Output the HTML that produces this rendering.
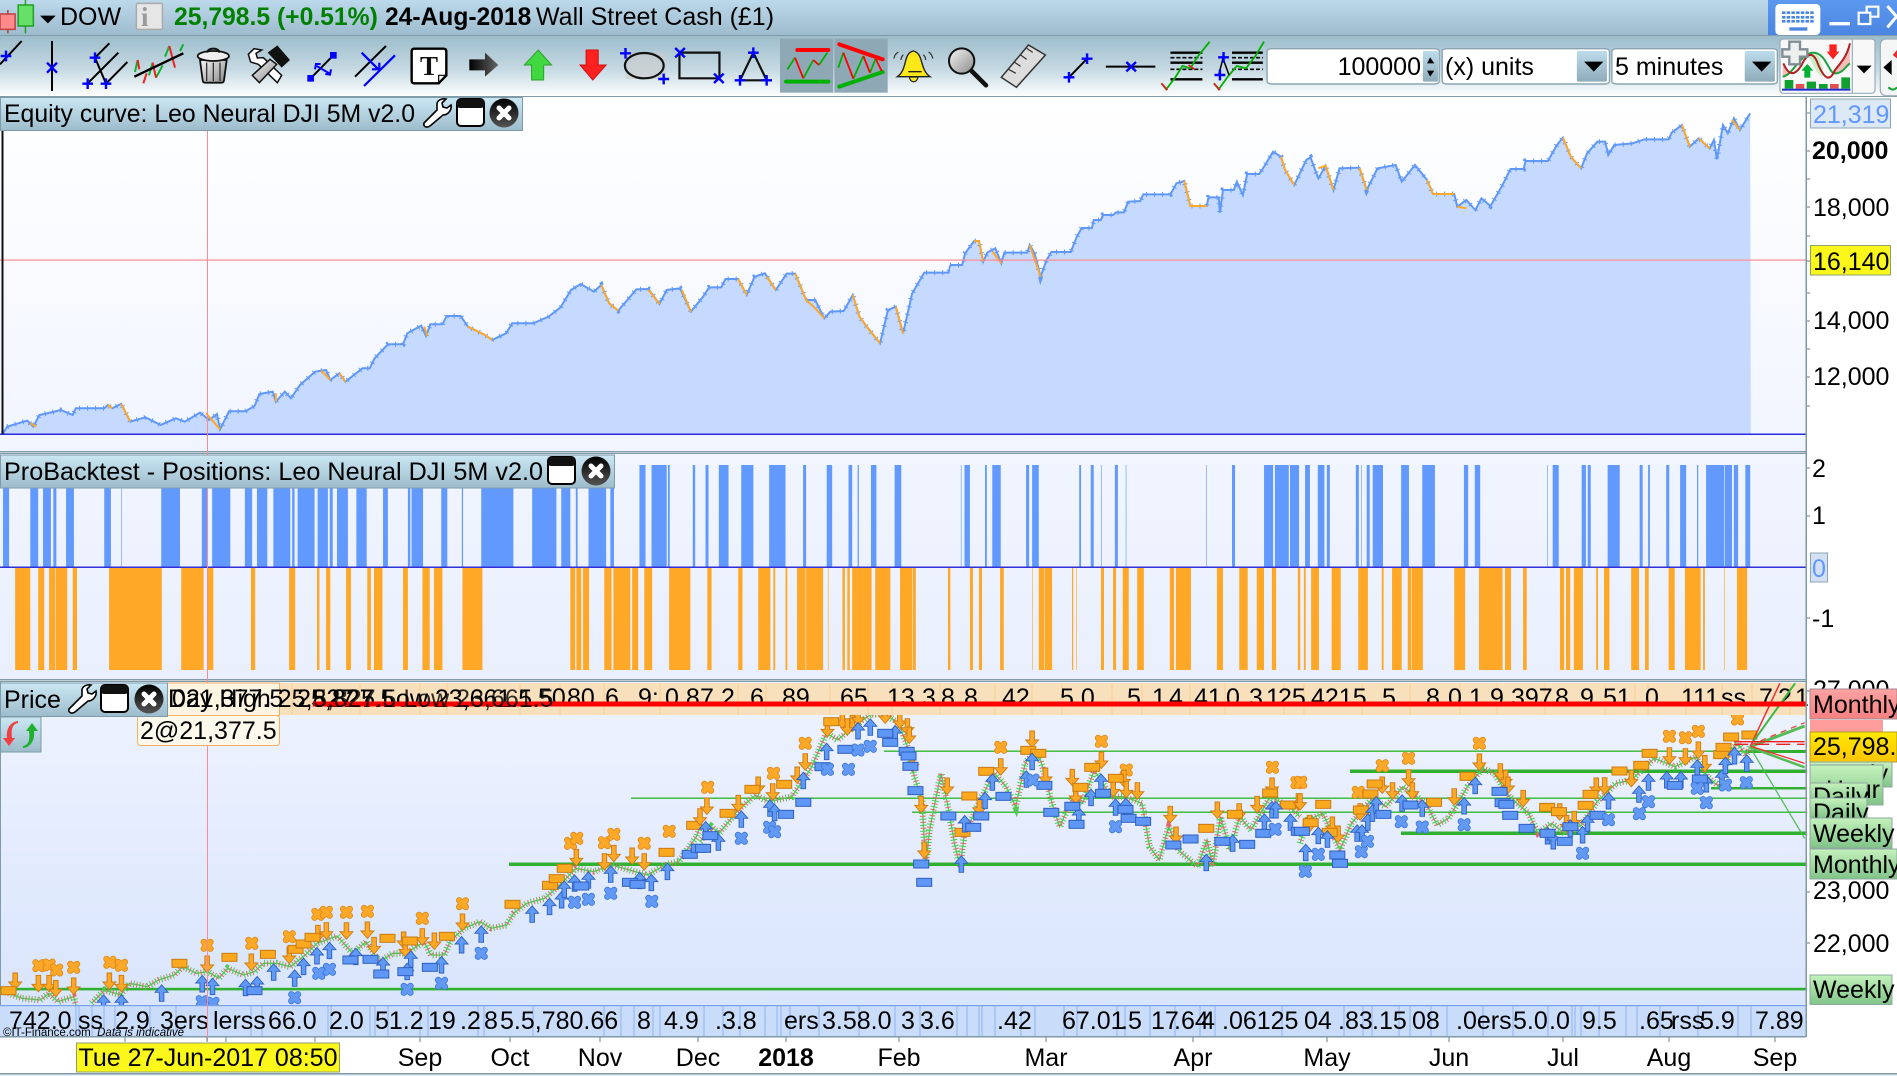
<!DOCTYPE html>
<html><head><meta charset="utf-8"><title>DOW</title>
<style>
html,body{margin:0;padding:0;background:#fff;width:1897px;height:1076px;overflow:hidden}
svg{position:absolute;left:0;top:0;display:block}
text{font-family:"Liberation Sans",Arial,sans-serif;font-size:25px;fill:#000;white-space:pre}
.n *{vector-effect:non-scaling-stroke}
.b{font-weight:bold}
</style></head><body>
<svg width="1897" height="1076" viewBox="0 0 1897 1076" xmlns="http://www.w3.org/2000/svg">
<defs>
<linearGradient id="gT" x1="0" y1="0" x2="0" y2="1"><stop offset="0" stop-color="#bcd9ec"/><stop offset="1" stop-color="#9dbccd"/></linearGradient>
<linearGradient id="gB" x1="0" y1="0" x2="0" y2="1"><stop offset="0" stop-color="#9dbdcc"/><stop offset=".55" stop-color="#c5d9e2"/><stop offset="1" stop-color="#fdfefe"/></linearGradient>
<linearGradient id="gH" x1="0" y1="0" x2="0" y2="1"><stop offset="0" stop-color="#cbe7f4"/><stop offset="1" stop-color="#9dbccb"/></linearGradient>
<linearGradient id="gE" x1="0" y1="0" x2="0" y2="1"><stop offset="0" stop-color="#fff"/><stop offset="1" stop-color="#f1f5ff"/></linearGradient>
<linearGradient id="gP" x1="0" y1="0" x2="0" y2="1"><stop offset="0" stop-color="#f1f5ff"/><stop offset="1" stop-color="#e9effd"/></linearGradient>
<linearGradient id="gR" x1="0" y1="0" x2="0" y2="1"><stop offset="0" stop-color="#eff3ff"/><stop offset="1" stop-color="#d9e5fc"/></linearGradient>
<linearGradient id="gD" x1="0" y1="0" x2="0" y2="1"><stop offset="0" stop-color="#bcdcec"/><stop offset="1" stop-color="#8fabb9"/></linearGradient>
<linearGradient id="gG" x1="0" y1="0" x2="0" y2="1"><stop offset="0" stop-color="#c4f2bc"/><stop offset="1" stop-color="#80c488"/></linearGradient>
<linearGradient id="gO" x1="0" y1="0" x2="0" y2="1"><stop offset="0" stop-color="#ffe900"/><stop offset="1" stop-color="#fdc400"/></linearGradient>
<linearGradient id="gRd" x1="0" y1="0" x2="0" y2="1"><stop offset="0" stop-color="#ffa3a3"/><stop offset="1" stop-color="#f78080"/></linearGradient>
<linearGradient id="gC" x1="0" y1="0" x2="0" y2="1"><stop offset="0" stop-color="#000"/><stop offset="1" stop-color="#555"/></linearGradient>
<linearGradient id="gW" x1="0" y1="0" x2="0" y2="1"><stop offset="0" stop-color="#5c98ee"/><stop offset="1" stop-color="#4a86e2"/></linearGradient>
<linearGradient id="gA" x1="0" y1="0" x2="1" y2="0"><stop offset="0" stop-color="#000"/><stop offset="1" stop-color="#666"/></linearGradient>
<linearGradient id="gS" x1="0" y1="0" x2="1" y2="1"><stop offset="0" stop-color="#f6f6f6"/><stop offset="1" stop-color="#8a8a8a"/></linearGradient>
<g id="A"><path d="M-3.300-3.300L3.300 3.300M3.300-3.300L-3.300 3.300" fill="none" stroke="#dd8a18" stroke-width="6.500" stroke-linecap="round"/><path d="M-3.300-3.300L3.300 3.300M3.300-3.300L-3.300 3.300" fill="none" stroke="#ffa726" stroke-width="4.800" stroke-linecap="round"/></g>
<g id="B"><path d="M-2.300-8H2.300V1H6.500L0 8.500-6.500 1H-2.300Z" fill="#ffa726" stroke="#c97a10" stroke-width=".9"/></g>
<g id="C"><rect x="-7.500" y="-4" width="15" height="8" fill="#faa91f" stroke="#c97a10"/></g>
<g id="D"><path d="M-2.300 8H2.300V-1H6.500L0-8.500-6.500-1H-2.300Z" fill="#5f9bf5" stroke="#2f5fc0" stroke-width=".9"/></g>
<g id="E"><rect x="-7.500" y="-4" width="15" height="8" fill="#5e97f5" stroke="#2f5fc0"/></g>
<g id="F"><path d="M-3.300-3.300L3.300 3.300M3.300-3.300L-3.300 3.300" fill="none" stroke="#3f78d8" stroke-width="6.500" stroke-linecap="round"/><path d="M-3.300-3.300L3.300 3.300M3.300-3.300L-3.300 3.300" fill="none" stroke="#6199f5" stroke-width="4.800" stroke-linecap="round"/></g>
<g id="a3" transform="scale(2.24,3)"><use href="#A"/></g><g id="b3" transform="scale(2.24,3)"><use href="#B"/></g><g id="c3" transform="scale(2.24,3)"><use href="#C"/></g><g id="d3" transform="scale(2.24,3)"><use href="#D"/></g><g id="e3" transform="scale(2.24,3)"><use href="#E"/></g><g id="f3" transform="scale(2.24,3)"><use href="#F"/></g>
<g id="a5" transform="scale(2.613,3)"><use href="#A"/></g><g id="b5" transform="scale(2.613,3)"><use href="#B"/></g><g id="c5" transform="scale(2.613,3)"><use href="#C"/></g><g id="d5" transform="scale(2.613,3)"><use href="#D"/></g><g id="e5" transform="scale(2.613,3)"><use href="#E"/></g><g id="f5" transform="scale(2.613,3)"><use href="#F"/></g>
<g id="a4" transform="scale(2.626,3)"><use href="#A"/></g><g id="b4" transform="scale(2.626,3)"><use href="#B"/></g><g id="c4" transform="scale(2.626,3)"><use href="#C"/></g><g id="d4" transform="scale(2.626,3)"><use href="#D"/></g><g id="e4" transform="scale(2.626,3)"><use href="#E"/></g><g id="f4" transform="scale(2.626,3)"><use href="#F"/></g>
<path id="p" d="M-9 0H9M0-16V16" fill="none" stroke="#0000ff" stroke-width="2.400" vector-effect="non-scaling-stroke"/>
<path id="x" d="M-8-14L8 14M8-14L-8 14" fill="none" stroke="#0000ff" stroke-width="2.400" vector-effect="non-scaling-stroke"/>
<path id="pu" d="M-16 0H16M0-16V16" fill="none" stroke="#0000ff" stroke-width="2.400" vector-effect="non-scaling-stroke"/>
<path id="xu" d="M-15-15L15 15M15-15L-15 15" fill="none" stroke="#0000ff" stroke-width="2.400" vector-effect="non-scaling-stroke"/>
<g id="wr"><path d="M2 25L15 12V6C15 3 19 0 24 1L20 5 21 9 25 10 29 7C30 12 26 17 21 17L8 28C5 30 1 29 2 25Z" fill="#fff" stroke="#000" stroke-width="1.600"/></g>
<g id="win"><rect x="1" y="1" width="27" height="27" rx="4" fill="#fff" stroke="#000" stroke-width="2"/><rect x="1" y="1" width="27" height="9" rx="3" fill="#111"/></g>
<g id="cl"><circle cx="15" cy="15" r="14.500" fill="url(#gC)"/><path d="M10 10L20 20M20 10L10 20" stroke="#fff" stroke-width="5" stroke-linecap="round"/></g>
<path id="c8" fill="none" vector-effect="non-scaling-stroke" d="M5 1000L12 980 30 970 45 962 55 980 65 945 90 935 100 930 120 945 125 925 172 925 178 915 185 925 200 912 215 965 240 952 265 975 290 955 305 965 330 938 345 960 358 942 363 988 378 934 405 934 420 918 428 882 450 875 455 905 470 875 480 895 495 855 520 815 538 810 545 840 560 820 570 845 598 805 610 805 618 775 640 733 665 733 672 700 695 677 703 708 710 673 730 673 737 648 760 648 772 680 800 705 812 720 835 700 845 670 880 670 905 650 925 622 942 570 958 552 980 575 992 555 1005 610 1020 632 1050 568 1070 567 1088 612 1100 570 1122 565 1140 635 1160 590 1170 562 1190 562 1197 537 1218 537 1232 585 1245 530 1262 520 1280 570 1298 521 1312 521 1330 600 1345 600 1360 655 1370 635 1392 633 1407 585 1418 650 1430 680 1452 730 1465 630 1478 620 1490 700 1505 580 1525 518 1565 518 1568 495"/>
<path id="c9" fill="none" vector-effect="non-scaling-stroke" d="M0 495L20 495 25 460 40 423 48 423 55 485 62 457 75 445 85 490 90 458 128 458 132 435 140 460 150 530 160 480 168 456 200 456 210 410 218 384 235 384 238 360 250 360 253 345 270 345 275 337 288 337 295 305 315 303 320 283 365 283 375 250 388 243 398 318 425 318 428 292 445 292 447 338 452 270 470 270 475 245 485 285 492 222 512 222 520 200 535 155 548 170 555 210 570 255 590 180 597 172 610 235 622 197 635 270 645 205 678 203 690 270 708 205 738 195 748 245 770 195 790 240 800 282 835 282 840 320 855 300 870 330 880 295 895 318 915 255 928 207 950 207 953 183 990 183 1005 135 1015 113 1028 170 1045 205 1055 160 1072 125 1085 125 1090 165 1100 135 1130 130 1150 118 1190 118 1195 98 1212 75 1225 140 1240 115 1258 145 1265 120 1270 178 1280 75 1288 100 1298 55 1308 90 1325 40"/>
<path id="q3" fill="none" vector-effect="non-scaling-stroke" d="M0 960L20 970 50 985 90 990 110 970 130 995 165 980 170 1005M205 1000L235 960 270 975 290 940 330 950 355 930 390 915 410 890 440 910 465 905 490 925 510 895 545 915 570 905 590 880 620 880 650 890 680 860 710 820 740 805 755 798 790 850 820 815 850 875 880 850 910 850 950 815 965 855 995 855 1010 810 1040 775 1075 755 1100 775 1135 765 1150 730 1180 700 1220 685 1250 650 1290 595 1330 605 1370 585 1410 600 1450 615 1490 585 1520 575 1560 500 1568 470"/>
<path id="q5" fill="none" vector-effect="non-scaling-stroke" d="M0 515L30 470 50 490 100 420 145 375 180 395 240 380 290 295 330 190 360 210 400 170 445 135 480 130 520 160 545 240 560 320 580 390 590 590 600 480 610 420 630 310 650 420 665 520 680 590 690 500 720 420 750 350 770 310 800 350 825 410 850 280 870 250 890 270 920 400 940 470 975 380 1000 400 1030 300 1075 380 1110 380 1155 400 1175 530 1200 570 1225 470 1250 540 1300 590 1325 510 1340 590 1360 440 1385 540 1410 440 1440 480 1490 380 1540 410 1568 440"/>
<path id="q4" fill="none" vector-effect="non-scaling-stroke" d="M0 520L20 450 60 430 105 540 135 460 190 385 225 410 270 350 330 400 360 465 390 445 440 350 480 295 510 310 550 380 600 430 625 490 660 460 695 490 740 465 780 395 830 340 870 330 930 265 985 290 1040 260 1070 320 1100 350 1130 240 1150 220 1170 255 1182 230"/>
</defs>

<!-- title bar -->
<rect x="0" y="0" width="1897" height="35" fill="url(#gT)"/>
<rect x="0" y="35" width="1897" height="1" fill="#7f9ba8"/>
<rect x="0" y="36" width="1897" height="60" fill="url(#gB)"/>
<rect x="0" y="96" width="1897" height="1" fill="#7f9ba8"/>
<rect x="1768" y="0" width="129" height="35" fill="url(#gW)"/>
<g transform="translate(1700,0) scale(.33333)" class="n">
<rect x="226" y="12" width="135" height="93" rx="13" fill="#fff"/>
<path d="M246 38H342M246 52H342M246 64H342" stroke="#4a86e2" stroke-width="2.600" stroke-dasharray="3.500 1.200"/>
<rect x="268" y="82" width="54" height="10" fill="#4a86e2"/>
<rect x="388" y="66" width="62" height="10" fill="#fff"/>
<rect x="500" y="20" width="35" height="30" fill="none" stroke="#fff" stroke-width="2.200"/>
<rect x="476" y="38" width="35" height="34" fill="#4a86e2" stroke="#fff" stroke-width="2.200"/>
<path d="M562 18L590 50 562 82" fill="none" stroke="#fff" stroke-width="3"/>
</g>

<g transform="scale(.6061,.3333)" class="n">
<path d="M13 30V100" stroke="#b04040" stroke-width="1.500"/><rect x="0" y="42" width="25" height="46" fill="#ff8a8a" stroke="#c04040" stroke-width="1.500"/>
<path d="M42 0V100" stroke="#20a020" stroke-width="1.500"/><rect x="30" y="15" width="25" height="63" fill="#66e066" stroke="#20a020" stroke-width="1.500"/>
<path d="M66 47H92L79 70Z" fill="#000"/>
<rect x="225" y="10" width="43" height="78" rx="3" fill="#e6e6e6" stroke="#aaa" stroke-width="1.500"/>
<path d="M775 0" fill="none"/>
<path d="M888 150L910 195H897V240H877V195H865Z" fill="#40d840" stroke="#30a030"/>
<path d="M978 240L1000 195H987V150H967V195H957Z" fill="#ff2020" stroke="#d01010"/>
<rect x="1032" y="157" width="66" height="80" fill="#ccc" opacity=".6"/><ellipse cx="1063" cy="197" rx="32" ry="38" fill="none" stroke="#111" stroke-width="2.200"/><use href="#p" x="1032" y="160"/><use href="#p" x="1095" y="237"/>
<rect x="1121" y="158" width="66" height="77" fill="none" stroke="#111" stroke-width="2.200"/><use href="#x" x="1122" y="158"/><use href="#x" x="1186" y="235"/>
</g>
<!-- left tools, uniform 3x coords -->
<g transform="translate(0,36) scale(.33333)" class="n" fill="none">
<path d="M0 85L65 15" stroke="#000" stroke-width="2"/><use href="#pu" x="18" y="60"/>
<path d="M156 15V165" stroke="#000" stroke-width="2"/><use href="#xu" x="156" y="95"/>
<path d="M285 65L328 22M265 140L355 50M318 143L382 78M285 65L318 143" stroke="#000" stroke-width="2"/><use href="#pu" x="285" y="65"/><use href="#pu" x="263" y="143"/><use href="#pu" x="318" y="143"/>
<path d="M405 108L413 72M447 118L458 80M468 125L488 88M495 62L508 30M540 45L550 25" stroke="#10b030" stroke-width="2"/>
<path d="M413 72L418 100M430 142L440 112M458 80L468 125M508 30L525 95" stroke="#f02020" stroke-width="2"/>
<path d="M403 122L550 52" stroke="#000" stroke-width="2.400"/>
<path d="M600 72H680L672 133Q671 140 664 140H616Q609 140 608 133Z" fill="url(#gS)" stroke="#111" stroke-width="1.800"/>
<ellipse cx="640" cy="60" rx="47" ry="15" fill="#eee" stroke="#111" stroke-width="1.800"/><path d="M622 50C622 34 658 34 658 50" stroke="#111" stroke-width="2"/>
<path d="M620 80V135M640 80V135M660 80V135" stroke="#333" stroke-width="1.300"/>
<path d="M745 55L762 38 785 42 768 52 772 66 790 65 845 118 832 140 775 85 752 78Z" fill="#fff" stroke="#111" stroke-width="1.500" transform="translate(0,0)"/>
<path d="M757 118L810 70 830 85 778 140Z" fill="url(#gS)" stroke="#111" stroke-width="1.500"/>
<path d="M803 50L832 28 870 72 845 95Z" fill="#111"/>
<path d="M932 127L1000 58" stroke="#000" stroke-width="2"/><path d="M922 117h20v20h-20zM990 48h20v20h-20z" fill="#0000ff"/>
<path d="M950 90L988 112M945 100L948 84 962 84M993 100L990 116 976 114" stroke="#0000ff" stroke-width="2"/>
<path d="M1065 122L1158 30" stroke="#000" stroke-width="2"/><path d="M1092 150L1185 58" stroke="#0000ff" stroke-width="2.200"/><path d="M1085 50L1135 100M1116 100H1138V80" stroke="#0000ff" stroke-width="2.200"/>
<path d="M1243 38H1330Q1339 38 1339 46V118L1316 142H1243Q1235 142 1235 134V46Q1235 38 1243 38Z" fill="#fff" stroke="#000" stroke-width="2.400"/><path d="M1316 142V118H1339" stroke="#000" stroke-width="1.200"/>
<path d="M1408 70H1455V50L1495 87 1455 122V103H1408Z" fill="url(#gA)"/>
</g>
<!-- middle tools, uniform coords -->
<g transform="translate(700,36) scale(.33333)" class="n" fill="none">
<path d="M160 50L120 133H200Z" stroke="#111" stroke-width="2.200"/><use href="#pu" x="160" y="50"/><use href="#pu" x="120" y="133"/><use href="#pu" x="200" y="133"/>
<rect x="240" y="8" width="160" height="162" fill="#8fa8b6"/><rect x="403" y="8" width="160" height="162" fill="#8fa8b6"/>
<path d="M292 42H385" stroke="#ff0000" stroke-width="4" stroke-linecap="round"/><path d="M258 137H385" stroke="#00b000" stroke-width="4" stroke-linecap="round"/>
<path d="M262 100L285 65M310 127L340 72M357 87L382 50" stroke="#00b000" stroke-width="1.800"/><path d="M285 65L310 127M340 72L357 87" stroke="#ff0000" stroke-width="1.800"/>
<path d="M418 25L548 70" stroke="#ff0000" stroke-width="4" stroke-linecap="round"/><path d="M418 152L548 108" stroke="#00b000" stroke-width="4" stroke-linecap="round"/>
<path d="M415 95L430 50M460 128L490 60M510 110L527 68" stroke="#00b000" stroke-width="1.800"/><path d="M430 50L460 128M490 60L510 110M527 68L545 105" stroke="#ff0000" stroke-width="1.800"/>
<path d="M640 45C608 52 624 100 592 122H690C658 100 672 52 640 45Z" fill="#ffe81a" stroke="#222" stroke-width="1.400"/><path d="M625 107H665" stroke="#222" stroke-width="1.400"/><path d="M628 123C630 142 652 142 654 123Z" fill="#ffe81a" stroke="#222" stroke-width="1.200"/>
<path d="M582 68C582 60 588 52 595 48M603 72C603 66 606 60 610 56M698 68C698 60 692 52 686 48M677 72C677 66 674 60 670 56" stroke="#333" stroke-width="1.200"/>
<circle cx="785" cy="75" r="38" fill="url(#gS)" stroke="#111" stroke-width="2"/><path d="M815 105L858 148" stroke="#111" stroke-width="4.500" stroke-linecap="round"/>
</g>
<g transform="translate(950,0) scale(.6039,.3333)" class="n">
<path d="M85 232L130 135 158 165 110 262Z" fill="#ddd" stroke="#333" stroke-width="1.500"/><path d="M97 208L109 220M107 187L117 199M117 165L127 178M127 145L137 157" stroke="#333" stroke-width="1.200"/>
<path d="M197 232L227 176" stroke="#000" stroke-width="2"/><use href="#p" x="197" y="232"/><use href="#p" x="227" y="176"/>
<path d="M258 200H340" stroke="#000" stroke-width="2"/><use href="#x" x="300" y="200"/>
<path d="M365 158H418M365 238H418M365 188H418" stroke="#000" stroke-width="2.400"/><path d="M365 173H418M365 208H418" stroke="#000" stroke-width="1.600" stroke-dasharray="4 2"/>
<path d="M350 250L358 268 372 235 385 198 398 205 410 170 430 125" fill="none" stroke="#00b000" stroke-width="1.800"/><path d="M350 250L360 270M395 195L405 208" stroke="#e02020" stroke-width="1.800"/>
<path d="M467 158H518M467 238H518M467 188H518" stroke="#000" stroke-width="2.400"/><path d="M467 173H518M467 208H518" stroke="#000" stroke-width="1.600" stroke-dasharray="4 2"/>
<path d="M437 250L445 268 460 230 475 198 490 205 505 170 520 125" fill="none" stroke="#00b000" stroke-width="1.800"/><path d="M437 250L447 270" stroke="#e02020" stroke-width="1.800"/><path d="M452 175L445 225M452 175L462 225" stroke="#000" stroke-width="1.500"/><use href="#p" x="453" y="172"/><use href="#p" x="447" y="225"/>
<rect x="525" y="146" width="285" height="106" rx="8" fill="#fff" stroke="#8ba5b2" stroke-width="1.400"/>
<rect x="783" y="153" width="25" height="92" rx="3" fill="url(#gD)"/><path d="M790 190L795 172 802 190ZM790 212L795 230 802 212Z" fill="#000"/>
<rect x="815" y="146" width="277" height="106" rx="8" fill="#fff" stroke="#8ba5b2" stroke-width="1.400"/><rect x="1038" y="153" width="50" height="92" rx="4" fill="url(#gD)"/><path d="M1050 185H1082L1066 215Z" fill="#000"/>
<rect x="1096" y="146" width="274" height="106" rx="8" fill="#fff" stroke="#8ba5b2" stroke-width="1.400"/><rect x="1316" y="153" width="50" height="92" rx="4" fill="url(#gD)"/><path d="M1328 185H1360L1344 215Z" fill="#000"/>
</g>
<!-- indicator button -->
<g transform="translate(1700,0) scale(.33333)" class="n">
<rect x="240" y="117" width="285" height="163" rx="10" fill="#f8f8f8" stroke="#9aaeb9" stroke-width="1.200"/><path d="M457 117V280" stroke="#9aaeb9" stroke-width="1.200"/>
<path d="M470 197H515L492 220Z" fill="#000"/>
<path d="M250 190C268 225 288 232 310 188C300 205 270 225 248 226Z" fill="#f6bcb8"/><path d="M340 158C355 158 365 185 372 225 355 240 340 190 322 165Z" fill="#c9efc4"/><path d="M405 212C425 190 440 170 450 130V190C435 200 420 218 405 220Z" fill="#f6bcb8"/>
<path d="M248 230C280 225 300 160 340 158C380 160 385 220 405 220C430 220 440 195 450 190" fill="none" stroke="#20a040" stroke-width="2"/>
<path d="M250 190C265 225 285 235 310 185C330 150 345 165 355 195C375 240 390 245 405 210C425 185 440 170 450 130" fill="none" stroke="#b02020" stroke-width="2"/>
<path d="M268 125H300V148H322V170H300V193H268V170H247V148H268Z" fill="#eef0f0" stroke="#7f8d95" stroke-width="2.400"/>
<path d="M322 192L340 212H331V233H313V212H304Z" fill="#00b030"/>
<path d="M388 133H410V155H418L399 178 380 155H388Z" fill="#ff2020"/>
<path d="M254 240h26v26h-26zM320 245h28v21h-28zM357 252h26v14h-26zM424 232h26v34h-26z" fill="#10a030"/><path d="M287 252h26v14h-26zM390 252h26v14h-26z" fill="#e05050"/>
<rect x="246" y="266" width="205" height="6" fill="#2030d0"/>
<rect x="541" y="117" width="70" height="170" rx="16" fill="#f4f6f6" stroke="#9aaeb9" stroke-width="1.200"/>
<path d="M550 202L575 180V225ZM600 180V225" fill="#000"/><path d="M578 165L591 150V175Z" fill="#e03030"/><path d="M565 262C575 270 582 272 591 262" stroke="#10a030" stroke-width="2" fill="none"/>
</g>

<text x="60" y="25">DOW</text>
<text x="141" y="26" style="font-size:27px;font-family:'Liberation Serif',serif;font-weight:bold;fill:#9a9a9a">i</text>
<text x="174" y="25" class="b" style="fill:#008000;font-size:24.700px">25,798.5 (+0.51%)</text>
<text x="385" y="25" class="b" style="font-size:24.600px">24-Aug-2018</text>
<text x="536" y="25">Wall Street Cash (£1)</text>
<text x="429" y="75" text-anchor="middle" class="b" style="font-family:'Liberation Serif',serif;font-size:27px;fill:#111">T</text>
<text x="1421" y="75" text-anchor="end">100000</text>
<text x="1445" y="75">(x) units</text>
<text x="1615" y="75">5 minutes</text>

<!-- equity pane -->
<rect x="0" y="97" width="1806" height="354" fill="url(#gE)"/>
<rect x="0" y="451" width="1806" height="1.500" fill="#7f9aa8"/>
<g transform="translate(0,100) scale(.6061,.3333)" class="n">
<path d="M5 1003L5 1000 12 980 30 970 45 962 55 980 65 945 90 935 100 930 120 945 125 925 172 925 178 915 185 925 200 912 215 965 240 952 265 975 290 955 305 965 330 938 345 960 358 942 363 988 378 934 405 934 420 918 428 882 450 875 455 905 470 875 480 895 495 855 520 815 538 810 545 840 560 820 570 845 598 805 610 805 618 775 640 733 665 733 672 700 695 677 703 708 710 673 730 673 737 648 760 648 772 680 800 705 812 720 835 700 845 670 880 670 905 650 925 622 942 570 958 552 980 575 992 555 1005 610 1020 632 1050 568 1070 567 1088 612 1100 570 1122 565 1140 635 1160 590 1170 562 1190 562 1197 537 1218 537 1232 585 1245 530 1262 520 1280 570 1298 521 1312 521 1330 600 1345 600 1360 655 1370 635 1392 633 1407 585 1418 650 1430 680 1452 730 1465 630 1478 620 1490 700 1505 580 1525 518 1565 518 1568 495 1568 1003Z" fill="#c6daff"/>
<use href="#c8" stroke="#6098f8" stroke-width="2"/><use href="#c8" stroke="#6098f8" stroke-width="5" stroke-dasharray="1 7"/>
<path d="M178 915L185 925M200 912L215 965M772 680L800 705 812 720M530 812L545 840M560 820L570 845M455 880V905M1218 537L1232 585M1265 530L1280 570M1312 521L1330 600 1345 625 1360 655M1407 585L1418 650 1430 680 1452 730M1478 620L1490 700M1125 570L1140 635M1070 570L1088 612M992 555L1005 610 1020 632M340 940L363 988M50 970L60 980M700 680L705 708" fill="none" stroke="#ffa726" stroke-width="2"/>
</g>
<g transform="translate(950,100) scale(.6039,.3333)" class="n">
<path d="M0 1003V495L20 495 25 460 40 423 48 423 55 485 62 457 75 445 85 490 90 458 128 458 132 435 140 460 150 530 160 480 168 456 200 456 210 410 218 384 235 384 238 360 250 360 253 345 270 345 275 337 288 337 295 305 315 303 320 283 365 283 375 250 388 243 398 318 425 318 428 292 445 292 447 338 452 270 470 270 475 245 485 285 492 222 512 222 520 200 535 155 548 170 555 210 570 255 590 180 597 172 610 235 622 197 635 270 645 205 678 203 690 270 708 205 738 195 748 245 770 195 790 240 800 282 835 282 840 320 855 300 870 330 880 295 895 318 915 255 928 207 950 207 953 183 990 183 1005 135 1015 113 1028 170 1045 205 1055 160 1072 125 1085 125 1090 165 1100 135 1130 130 1150 118 1190 118 1195 98 1212 75 1225 140 1240 115 1258 145 1265 120 1270 178 1280 75 1288 100 1298 55 1308 90 1325 40 1326 1003Z" fill="#c6daff"/>
<use href="#c9" stroke="#6098f8" stroke-width="2"/><use href="#c9" stroke="#6098f8" stroke-width="5" stroke-dasharray="1 7"/>
<path d="M40 423L48 423 55 485M70 455L85 490M132 435L150 530M388 243L398 318 425 318M548 170L555 210 570 255M610 205L622 197 635 270M678 203L690 270M790 240L800 282 835 282M840 320L855 325M1015 113L1028 170 1045 205M1212 75L1225 140M1240 115L1258 145M1295 60L1308 90" fill="none" stroke="#ffa726" stroke-width="2"/>
</g>
<rect x="0" y="433.500" width="1806" height="1.500" fill="#2a2ae0"/>
<rect x="0" y="259.500" width="1806" height="1.200" fill="#ff8a90"/>
<rect x="1.500" y="131" width="2" height="303" fill="#111"/>

<!-- positions pane -->
<rect x="0" y="454" width="1806" height="225" fill="url(#gP)"/>
<rect x="0" y="453" width="1806" height="1" fill="#7f9aa8"/>
<rect x="0" y="679" width="1806" height="1.500" fill="#7f9aa8"/>
<g transform="translate(0,465) scale(.6061,102.3)" fill="#6199ff">
<path d="M5 0h10v1h-10zM50 0h13v1h-13zM71 0h13v1h-13zM88 0h5v1h-5zM109 0h13v1h-13zM172 0h11v1h-11zM200 0h1v1h-1zM266 0h31v1h-31zM333 0h9v1h-9zM350 0h30v1h-30zM404 0h12v1h-12zM424 0h17v1h-17zM451 0h28v1h-28zM482 0h4v1h-4zM491 0h28v1h-28zM524 0h17v1h-17zM544 0h5v1h-5zM556 0h18v1h-18zM588 0h17v1h-17zM632 0h8v1h-8zM673 0h4v1h-4zM679 0h19v1h-19zM728 0h10v1h-10zM762 0h2v1h-2zM794 0h53v1h-53zM878 0h40v1h-40zM926 0h15v1h-15zM950 0h3v1h-3zM971 0h29v1h-29zM1007 0h6v1h-6zM1055 0h10v1h-10zM1075 0h25v1h-25zM1102 0h3v1h-3zM1143 0h4v1h-4zM1164 0h5v1h-5zM1186 0h16v1h-16zM1223 0h20v1h-20zM1269 0h27v1h-27zM1325 0h5v1h-5zM1364 0h9v1h-9zM1400 0h6v1h-6zM1415 0h2v1h-2zM1437 0h9v1h-9zM1476 0h11v1h-11z"/>
</g>
<g transform="translate(950,465) scale(.6039,102.3)" fill="#6199ff">
<path d="M18 0h1v1h-1zM24 0h9v1h-9zM58 0h3v1h-3zM70 0h14v1h-14zM126 0h5v1h-5zM136 0h11v1h-11zM214 0h3v1h-3zM233 0h5v1h-5zM250 0h1v1h-1zM273 0h5v1h-5zM291 0h1v1h-1zM424 0h1v1h-1zM467 0h5v1h-5zM520 0h15v1h-15zM538 0h23v1h-23zM563 0h15v1h-15zM588 0h8v1h-8zM609 0h11v1h-11zM624 0h5v1h-5zM672 0h5v1h-5zM681 0h1v1h-1zM690 0h5v1h-5zM700 0h5v1h-5zM705 0h12v1h-12zM747 0h13v1h-13zM782 0h21v1h-21zM851 0h7v1h-7zM869 0h9v1h-9zM989 0h1v1h-1zM998 0h10v1h-10zM1046 0h7v1h-7zM1056 0h5v1h-5zM1089 0h20v1h-20zM1142 0h5v1h-5zM1156 0h3v1h-3zM1186 0h5v1h-5zM1209 0h10v1h-10zM1237 0h2v1h-2zM1252 0h30v1h-30zM1283 0h12v1h-12zM1298 0h7v1h-7zM1317 0h8v1h-8z"/>
</g>
<g transform="translate(0,567) scale(.6061,103)" fill="#ffa726">
<path d="M25 0h25v1h-25zM63 0h10v1h-10zM81 0h10v1h-10zM92 0h19v1h-19zM120 0h7v1h-7zM180 0h87v1h-87zM299 0h37v1h-37zM343 0h9v1h-9zM414 0h7v1h-7zM477 0h10v1h-10zM523 0h4v1h-4zM538 0h7v1h-7zM571 0h8v1h-8zM606 0h6v1h-6zM617 0h14v1h-14zM665 0h8v1h-8zM697 0h12v1h-12zM716 0h14v1h-14zM763 0h33v1h-33zM941 0h8v1h-8zM951 0h8v1h-8zM962 0h10v1h-10zM997 0h12v1h-12zM1012 0h28v1h-28zM1043 0h10v1h-10zM1063 0h13v1h-13zM1104 0h35v1h-35zM1167 0h7v1h-7zM1218 0h7v1h-7zM1251 0h20v1h-20zM1276 0h3v1h-3zM1296 0h3v1h-3zM1315 0h14v1h-14zM1330 0h28v1h-28zM1366 0h1v1h-1zM1390 0h4v1h-4zM1398 0h4v1h-4zM1406 0h32v1h-32zM1444 0h25v1h-25zM1485 0h20v1h-20zM1506 0h5v1h-5zM1564 0h4v1h-4z"/>
</g>
<g transform="translate(950,567) scale(.6039,103)" fill="#ffa726">
<path d="M33 0h5v1h-5zM48 0h5v1h-5zM83 0h6v1h-6zM136 0h1v1h-1zM147 0h9v1h-9zM157 0h12v1h-12zM202 0h2v1h-2zM209 0h1v1h-1zM250 0h5v1h-5zM270 0h5v1h-5zM286 0h10v1h-10zM310 0h11v1h-11zM364 0h7v1h-7zM374 0h25v1h-25zM442 0h10v1h-10zM479 0h14v1h-14zM508 0h12v1h-12zM533 0h7v1h-7zM576 0h4v1h-4zM586 0h3v1h-3zM598 0h13v1h-13zM632 0h15v1h-15zM676 0h16v1h-16zM715 0h3v1h-3zM732 0h16v1h-16zM758 0h6v1h-6zM765 0h18v1h-18zM835 0h18v1h-18zM876 0h39v1h-39zM919 0h10v1h-10zM949 0h6v1h-6zM1010 0h7v1h-7zM1020 0h7v1h-7zM1033 0h15v1h-15zM1070 0h3v1h-3zM1083 0h9v1h-9zM1128 0h13v1h-13zM1151 0h6v1h-6zM1190 0h10v1h-10zM1217 0h26v1h-26zM1247 0h3v1h-3zM1282 0h1v1h-1zM1303 0h17v1h-17z"/>
</g>
<rect x="0" y="566.500" width="1806" height="1.500" fill="#3030d8"/>

<!-- price pane -->
<rect x="0" y="682" width="1806" height="323" fill="url(#gR)"/>
<rect x="0" y="681" width="1806" height="1" fill="#7f9aa8"/>
<rect x="0" y="682" width="1" height="355" fill="#7f9aa8"/>
<rect x="0" y="987.800" width="1806" height="2.600" fill="#30b030"/>
<rect x="631" y="797.500" width="1175" height="1.400" fill="#34b834"/>
<rect x="884" y="750.500" width="922" height="1.400" fill="#34b834"/>
<rect x="912" y="811.500" width="894" height="1.400" fill="#34b834"/>
<rect x="509" y="862.500" width="1297" height="3.500" fill="#30b030"/>
<rect x="1350" y="769.500" width="456" height="3.500" fill="#30b030"/>
<rect x="1401" y="831.500" width="405" height="3.500" fill="#30b030"/>
<rect x="1745" y="750" width="61" height="3" fill="#30b030"/>
<rect x="1711" y="787" width="95" height="2.500" fill="#30b030"/>

<g transform="translate(0,670) scale(.44643,.33333)" class="n">
<use href="#q3" stroke="#50c850" stroke-width="1.300"/><use href="#q3" stroke="#50c850" stroke-width="7" stroke-dasharray="1 5"/><use href="#q3" stroke="#e06868" stroke-width="6" stroke-dasharray="1 5" stroke-dashoffset="3"/>
<use href="#a3" x="87" y="887"/><use href="#a3" x="110" y="885"/><use href="#a3" x="127" y="900"/><use href="#a3" x="165" y="892"/><use href="#a3" x="246" y="877"/><use href="#a3" x="272" y="886"/><use href="#a3" x="464" y="826"/><use href="#a3" x="564" y="820"/><use href="#a3" x="648" y="800"/><use href="#a3" x="712" y="733"/><use href="#a3" x="731" y="727"/><use href="#a3" x="776" y="727"/><use href="#a3" x="823" y="724"/><use href="#a3" x="946" y="745"/><use href="#a3" x="1036" y="701"/><use href="#a3" x="1278" y="520"/><use href="#a3" x="1292" y="505"/><use href="#a3" x="1354" y="518"/><use href="#a3" x="1375" y="493"/><use href="#a3" x="1443" y="520"/><use href="#a3" x="1499" y="484"/>
<use href="#b3" x="34" y="933"/><use href="#b3" x="86" y="940"/><use href="#b3" x="110" y="940"/><use href="#b3" x="125" y="955"/><use href="#b3" x="165" y="948"/><use href="#b3" x="245" y="933"/><use href="#b3" x="272" y="940"/><use href="#b3" x="464" y="882"/><use href="#b3" x="563" y="876"/><use href="#b3" x="648" y="855"/><use href="#b3" x="712" y="790"/><use href="#b3" x="731" y="782"/><use href="#b3" x="776" y="782"/><use href="#b3" x="823" y="780"/><use href="#b3" x="838" y="826"/><use href="#b3" x="904" y="810"/><use href="#b3" x="908" y="835"/><use href="#b3" x="946" y="800"/><use href="#b3" x="973" y="813"/><use href="#b3" x="1036" y="756"/><use href="#b3" x="1291" y="562"/><use href="#b3" x="1354" y="575"/><use href="#b3" x="1375" y="550"/><use href="#b3" x="1416" y="558"/><use href="#b3" x="1443" y="575"/>
<use href="#c3" x="19" y="962"/><use href="#c3" x="402" y="880"/><use href="#c3" x="514" y="862"/><use href="#c3" x="600" y="853"/><use href="#c3" x="662" y="838"/><use href="#c3" x="680" y="822"/><use href="#c3" x="700" y="802"/><use href="#c3" x="868" y="805"/><use href="#c3" x="918" y="813"/><use href="#c3" x="1001" y="799"/><use href="#c3" x="1148" y="703"/><use href="#c3" x="1232" y="646"/><use href="#c3" x="1247" y="626"/><use href="#c3" x="1265" y="595"/><use href="#c3" x="1493" y="547"/><use href="#c3" x="1555" y="466"/>
<use href="#d3" x="232" y="1000"/><use href="#d3" x="272" y="1000"/><use href="#d3" x="362" y="970"/><use href="#d3" x="453" y="942"/><use href="#d3" x="476" y="950"/><use href="#d3" x="550" y="953"/><use href="#d3" x="576" y="945"/><use href="#d3" x="613" y="907"/><use href="#d3" x="660" y="925"/><use href="#d3" x="680" y="890"/><use href="#d3" x="710" y="858"/><use href="#d3" x="738" y="842"/><use href="#d3" x="797" y="860"/><use href="#d3" x="858" y="888"/><use href="#d3" x="920" y="868"/><use href="#d3" x="912" y="905"/><use href="#d3" x="989" y="885"/><use href="#d3" x="1034" y="825"/><use href="#d3" x="1078" y="793"/><use href="#d3" x="1192" y="733"/><use href="#d3" x="1231" y="710"/><use href="#d3" x="1258" y="690"/><use href="#d3" x="1264" y="658"/><use href="#d3" x="1287" y="640"/><use href="#d3" x="1318" y="631"/><use href="#d3" x="1368" y="613"/><use href="#d3" x="1433" y="632"/><use href="#d3" x="1459" y="638"/><use href="#d3" x="1495" y="605"/>
<use href="#e3" x="570" y="962"/><use href="#e3" x="785" y="870"/><use href="#e3" x="830" y="868"/><use href="#e3" x="854" y="912"/><use href="#e3" x="908" y="905"/><use href="#e3" x="963" y="892"/><use href="#e3" x="1302" y="648"/><use href="#e3" x="1411" y="637"/><use href="#e3" x="1428" y="643"/><use href="#e3" x="1545" y="553"/><use href="#e3" x="1565" y="535"/>
<use href="#f3" x="660" y="983"/><use href="#f3" x="714" y="910"/><use href="#f3" x="738" y="898"/><use href="#f3" x="912" y="958"/><use href="#f3" x="989" y="940"/><use href="#f3" x="1078" y="850"/><use href="#f3" x="1287" y="697"/><use href="#f3" x="1318" y="688"/><use href="#f3" x="1368" y="670"/><use href="#f3" x="1460" y="694"/><use href="#f3" x="453" y="995"/><use href="#f3" x="477" y="1000"/>
</g>
<g transform="translate(700,670) scale(.38265,.33333)" class="n">
<use href="#q5" stroke="#50c850" stroke-width="1.300"/><use href="#q5" stroke="#50c850" stroke-width="7" stroke-dasharray="1 5"/><use href="#q5" stroke="#e06868" stroke-width="6" stroke-dasharray="1 5" stroke-dashoffset="3"/>
<use href="#a5" x="20" y="352"/><use href="#a5" x="192" y="310"/><use href="#a5" x="275" y="220"/><use href="#a5" x="786" y="232"/><use href="#a5" x="1049" y="214"/><use href="#a5" x="1114" y="300"/><use href="#a5" x="1496" y="292"/><use href="#a5" x="1560" y="338"/>
<use href="#b5" x="18" y="408"/><use href="#b5" x="0" y="440"/><use href="#b5" x="100" y="400"/><use href="#b5" x="152" y="345"/><use href="#b5" x="190" y="365"/><use href="#b5" x="254" y="315"/><use href="#b5" x="275" y="275"/><use href="#b5" x="333" y="175"/><use href="#b5" x="372" y="150"/><use href="#b5" x="398" y="160"/><use href="#b5" x="385" y="170"/><use href="#b5" x="413" y="140"/><use href="#b5" x="484" y="135"/><use href="#b5" x="522" y="150"/><use href="#b5" x="542" y="170"/><use href="#b5" x="547" y="195"/><use href="#b5" x="555" y="280"/><use href="#b5" x="578" y="403"/><use href="#b5" x="586" y="540"/><use href="#b5" x="646" y="348"/><use href="#b5" x="786" y="290"/><use href="#b5" x="730" y="410"/><use href="#b5" x="868" y="207"/><use href="#b5" x="903" y="318"/><use href="#b5" x="973" y="322"/><use href="#b5" x="982" y="375"/><use href="#b5" x="1049" y="270"/><use href="#b5" x="1080" y="355"/><use href="#b5" x="1108" y="325"/><use href="#b5" x="1114" y="358"/><use href="#b5" x="1143" y="362"/><use href="#b5" x="1229" y="433"/><use href="#b5" x="1244" y="495"/><use href="#b5" x="1352" y="420"/><use href="#b5" x="1409" y="425"/><use href="#b5" x="1456" y="403"/><use href="#b5" x="1495" y="348"/><use href="#b5" x="1564" y="395"/>
<use href="#c5" x="72" y="430"/><use href="#c5" x="137" y="358"/><use href="#c5" x="220" y="343"/><use href="#c5" x="343" y="155"/><use href="#c5" x="748" y="304"/><use href="#c5" x="704" y="378"/><use href="#c5" x="686" y="487"/><use href="#c5" x="858" y="241"/><use href="#c5" x="884" y="250"/><use href="#c5" x="1025" y="292"/><use href="#c5" x="994" y="352"/><use href="#c5" x="1087" y="325"/><use href="#c5" x="1398" y="433"/><use href="#c5" x="1490" y="369"/><use href="#c5" x="1537" y="405"/><use href="#c5" x="1323" y="475"/>
<use href="#d5" x="15" y="480"/><use href="#d5" x="48" y="517"/><use href="#d5" x="108" y="448"/><use href="#d5" x="183" y="415"/><use href="#d5" x="195" y="428"/><use href="#d5" x="270" y="332"/><use href="#d5" x="331" y="245"/><use href="#d5" x="413" y="183"/><use href="#d5" x="445" y="172"/><use href="#d5" x="510" y="192"/><use href="#d5" x="692" y="462"/><use href="#d5" x="683" y="583"/><use href="#d5" x="745" y="392"/><use href="#d5" x="764" y="337"/><use href="#d5" x="868" y="275"/><use href="#d5" x="853" y="328"/><use href="#d5" x="990" y="438"/><use href="#d5" x="1022" y="383"/><use href="#d5" x="1048" y="337"/><use href="#d5" x="1086" y="412"/><use href="#d5" x="1113" y="410"/><use href="#d5" x="1323" y="578"/><use href="#d5" x="1392" y="520"/><use href="#d5" x="1475" y="457"/><use href="#d5" x="1495" y="420"/><use href="#d5" x="1505" y="420"/><use href="#d5" x="1543" y="457"/>
<use href="#e5" x="8" y="535"/><use href="#e5" x="27" y="497"/><use href="#e5" x="225" y="433"/><use href="#e5" x="270" y="397"/><use href="#e5" x="320" y="290"/><use href="#e5" x="380" y="238"/><use href="#e5" x="484" y="190"/><use href="#e5" x="497" y="217"/><use href="#e5" x="540" y="244"/><use href="#e5" x="545" y="258"/><use href="#e5" x="550" y="289"/><use href="#e5" x="563" y="362"/><use href="#e5" x="578" y="582"/><use href="#e5" x="586" y="637"/><use href="#e5" x="649" y="438"/><use href="#e5" x="714" y="472"/><use href="#e5" x="735" y="438"/><use href="#e5" x="793" y="379"/><use href="#e5" x="900" y="346"/><use href="#e5" x="918" y="427"/><use href="#e5" x="973" y="409"/><use href="#e5" x="984" y="463"/><use href="#e5" x="1053" y="370"/><use href="#e5" x="1112" y="418"/><use href="#e5" x="1120" y="445"/><use href="#e5" x="1158" y="454"/><use href="#e5" x="1237" y="525"/><use href="#e5" x="1282" y="507"/><use href="#e5" x="1365" y="514"/><use href="#e5" x="1430" y="523"/><use href="#e5" x="1472" y="490"/><use href="#e5" x="1565" y="484"/>
<use href="#f5" x="108" y="505"/><use href="#f5" x="182" y="472"/><use href="#f5" x="195" y="485"/><use href="#f5" x="333" y="298"/><use href="#f5" x="388" y="298"/><use href="#f5" x="413" y="240"/><use href="#f5" x="445" y="229"/><use href="#f5" x="870" y="330"/><use href="#f5" x="1086" y="470"/><use href="#f5" x="1503" y="478"/>
</g>
<g transform="translate(1300,670) scale(.38084,.33333)" class="n">
<use href="#q4" stroke="#50c850" stroke-width="1.300"/><use href="#q4" stroke="#50c850" stroke-width="7" stroke-dasharray="1 5"/><use href="#q4" stroke="#e06868" stroke-width="6" stroke-dasharray="1 5" stroke-dashoffset="3"/>
<use href="#a4" x="216" y="287"/><use href="#a4" x="285" y="265"/><use href="#a4" x="471" y="220"/><use href="#a4" x="153" y="367"/><use href="#a4" x="2" y="337"/><use href="#a4" x="970" y="199"/><use href="#a4" x="1012" y="203"/><use href="#a4" x="1046" y="184"/><use href="#a4" x="1149" y="147"/>
<use href="#b4" x="0" y="395"/><use href="#b4" x="25" y="460"/><use href="#b4" x="85" y="465"/><use href="#b4" x="100" y="492"/><use href="#b4" x="158" y="425"/><use href="#b4" x="216" y="345"/><use href="#b4" x="243" y="362"/><use href="#b4" x="285" y="323"/><use href="#b4" x="295" y="362"/><use href="#b4" x="405" y="380"/><use href="#b4" x="471" y="276"/><use href="#b4" x="526" y="305"/><use href="#b4" x="540" y="325"/><use href="#b4" x="546" y="345"/><use href="#b4" x="586" y="385"/><use href="#b4" x="682" y="425"/><use href="#b4" x="700" y="460"/><use href="#b4" x="720" y="448"/><use href="#b4" x="778" y="348"/><use href="#b4" x="800" y="347"/><use href="#b4" x="870" y="325"/><use href="#b4" x="970" y="257"/><use href="#b4" x="1012" y="260"/><use href="#b4" x="1046" y="240"/><use href="#b4" x="1063" y="280"/>
<use href="#c4" x="61" y="403"/><use href="#c4" x="78" y="487"/><use href="#c4" x="28" y="458"/><use href="#c4" x="160" y="420"/><use href="#c4" x="185" y="372"/><use href="#c4" x="196" y="342"/><use href="#c4" x="352" y="397"/><use href="#c4" x="440" y="319"/><use href="#c4" x="649" y="412"/><use href="#c4" x="680" y="425"/><use href="#c4" x="750" y="406"/><use href="#c4" x="763" y="373"/><use href="#c4" x="839" y="303"/><use href="#c4" x="896" y="286"/><use href="#c4" x="918" y="250"/><use href="#c4" x="1106" y="254"/><use href="#c4" x="1112" y="232"/><use href="#c4" x="1132" y="201"/><use href="#c4" x="1180" y="195"/>
<use href="#d4" x="15" y="548"/><use href="#d4" x="48" y="497"/><use href="#d4" x="72" y="508"/><use href="#d4" x="150" y="490"/><use href="#d4" x="163" y="490"/><use href="#d4" x="178" y="457"/><use href="#d4" x="190" y="430"/><use href="#d4" x="200" y="405"/><use href="#d4" x="268" y="400"/><use href="#d4" x="321" y="415"/><use href="#d4" x="460" y="347"/><use href="#d4" x="431" y="408"/><use href="#d4" x="650" y="498"/><use href="#d4" x="665" y="513"/><use href="#d4" x="710" y="475"/><use href="#d4" x="742" y="495"/><use href="#d4" x="755" y="460"/><use href="#d4" x="810" y="393"/><use href="#d4" x="890" y="373"/><use href="#d4" x="915" y="337"/><use href="#d4" x="963" y="330"/><use href="#d4" x="1000" y="330"/><use href="#d4" x="1043" y="295"/><use href="#d4" x="1067" y="342"/><use href="#d4" x="1108" y="325"/><use href="#d4" x="1117" y="287"/><use href="#d4" x="1141" y="258"/><use href="#d4" x="1173" y="280"/>
<use href="#e4" x="5" y="484"/><use href="#e4" x="98" y="555"/><use href="#e4" x="105" y="580"/><use href="#e4" x="219" y="433"/><use href="#e4" x="290" y="405"/><use href="#e4" x="524" y="364"/><use href="#e4" x="532" y="398"/><use href="#e4" x="542" y="403"/><use href="#e4" x="552" y="436"/><use href="#e4" x="595" y="475"/><use href="#e4" x="650" y="490"/><use href="#e4" x="695" y="514"/><use href="#e4" x="710" y="470"/><use href="#e4" x="781" y="436"/><use href="#e4" x="984" y="346"/><use href="#e4" x="1050" y="327"/>
<use href="#f4" x="14" y="604"/><use href="#f4" x="48" y="553"/><use href="#f4" x="161" y="545"/><use href="#f4" x="177" y="514"/><use href="#f4" x="266" y="455"/><use href="#f4" x="321" y="471"/><use href="#f4" x="431" y="464"/><use href="#f4" x="742" y="550"/><use href="#f4" x="810" y="449"/><use href="#f4" x="891" y="431"/><use href="#f4" x="915" y="395"/><use href="#f4" x="1043" y="355"/><use href="#f4" x="1067" y="398"/><use href="#f4" x="1117" y="345"/><use href="#f4" x="1172" y="338"/>
</g>

<!-- top band -->
<rect x="167" y="683" width="1639" height="32" fill="#f8e0bc"/>
<path d="M214 683V715M292 683V715M360 683V715M420 683V715M447 683V715M520 683V715M560 683V715M604 683V715M660 683V715M738 683V715M766 683V715M788 683V715M830 683V715M868 683V715M892 683V715M940 683V715M995 683V715M1032 683V715M1062 683V715M1112 683V715M1142 683V715M1190 683V715M1225 683V715M1284 683V715M1304 683V715M1362 683V715M1410 683V715M1460 683V715M1497 683V715M1545 683V715M1605 683V715M1635 683V715M1648 683V715M1686 683V715M1722 683V715M1752 683V715M1790 683V715" stroke="#fbd49c" stroke-width="1.500"/>
<text y="706"><tspan x="538">50</tspan><tspan x="567">80</tspan><tspan x="605">6</tspan><tspan x="638">9:</tspan><tspan x="665">0.8</tspan><tspan x="700">7</tspan><tspan x="721">2</tspan><tspan x="750">6</tspan><tspan x="782">89</tspan><tspan x="840">65</tspan><tspan x="887">13</tspan><tspan x="922">3</tspan><tspan x="941">8</tspan><tspan x="964">8</tspan><tspan x="1002">42</tspan><tspan x="1060">5.0</tspan><tspan x="1127">5</tspan><tspan x="1152">1</tspan><tspan x="1169">4</tspan><tspan x="1194">41</tspan><tspan x="1226">0</tspan><tspan x="1249">3</tspan><tspan x="1266">1</tspan><tspan x="1278">25</tspan><tspan x="1311">4215</tspan><tspan x="1382">5</tspan><tspan x="1426">8</tspan><tspan x="1448">0</tspan><tspan x="1469">1</tspan><tspan x="1490">9</tspan><tspan x="1511">397</tspan><tspan x="1555">8</tspan><tspan x="1580">9</tspan><tspan x="1603">51</tspan><tspan x="1645">0</tspan><tspan x="1681">111</tspan><tspan x="1721">ss</tspan><tspan x="1759">7</tspan><tspan x="1778">2</tspan><tspan x="1795">1</tspan></text>
<!-- forecast lines -->
<g transform="translate(1300,670) scale(.38084,.33333)" class="n" fill="none">
<path d="M1182 230L1260 40" stroke="#f03030" stroke-width="1.500"/><path d="M1190 215L1300 40" stroke="#40b840" stroke-width="2"/>
<path d="M1182 230L1325 168" stroke="#55bb55" stroke-width="3"/><path d="M1182 225L1325 158" stroke="#f04040" stroke-width="1.300" stroke-dasharray="6 5"/>
<path d="M1182 232L1325 292" stroke="#55bb55" stroke-width="2.500"/><path d="M1182 228L1325 280" stroke="#f03030" stroke-width="1.300"/>
<path d="M1182 232L1325 505" stroke="#55bb55" stroke-width="1.300"/>
<path d="M1140 215H1325" stroke="#f02020" stroke-width="1.300"/><path d="M1140 223H1325" stroke="#f02020" stroke-width="1.300" stroke-dasharray="14 7"/>
</g>
<!-- lower band -->
<rect x="0" y="1005" width="1806" height="32" fill="#c9ddfb"/>
<path d="M76 1005V1037M79 1005V1037M92 1005V1037M104 1005V1037M115 1005V1037M150 1005V1037M176 1005V1037M251 1005V1037M262 1005V1037M328 1005V1037M331 1005V1037M370 1005V1037M375 1005V1037M388 1005V1037M420 1005V1037M428 1005V1037M478 1005V1037M484 1005V1037M533 1005V1037M604 1005V1037M621 1005V1037M634 1005V1037M653 1005V1037M660 1005V1037M704 1005V1037M723 1005V1037M740 1005V1037M765 1005V1037M777 1005V1037M781 1005V1037M790 1005V1037M819 1005V1037M859 1005V1037M895 1005V1037M920 1005V1037M957 1005V1037M967 1005V1037M979 1005V1037M982 1005V1037M995 1005V1037M1021 1005V1037M1035 1005V1037M1064 1005V1037M1077 1005V1037M1117 1005V1037M1125 1005V1037M1150 1005V1037M1175 1005V1037M1200 1005V1037M1215 1005V1037M1282 1005V1037M1344 1005V1037M1363 1005V1037M1372 1005V1037M1399 1005V1037M1410 1005V1037M1431 1005V1037M1447 1005V1037M1483 1005V1037M1513 1005V1037M1548 1005V1037M1572 1005V1037M1575 1005V1037M1581 1005V1037M1599 1005V1037M1626 1005V1037M1637 1005V1037M1660 1005V1037M1698 1005V1037M1738 1005V1037M1751 1005V1037" stroke="#8fb4f0" stroke-width="1"/>
<rect x="0" y="1005" width="1806" height="1.200" fill="#7aa0e8"/>
<rect x="0" y="1036" width="1806" height="1.500" fill="#7f9aa8"/>
<text y="1029"><tspan x="9">742.0</tspan><tspan x="78">ss</tspan><tspan x="115">2.9</tspan><tspan x="160">3ers</tspan><tspan x="213">lerss</tspan><tspan x="268">66.0</tspan><tspan x="329">2.0</tspan><tspan x="375">51.2</tspan><tspan x="428">19</tspan><tspan x="460">.2</tspan><tspan x="484">8</tspan><tspan x="500">5.5,780.66</tspan><tspan x="637">8</tspan><tspan x="664">4.9</tspan><tspan x="715">.3.8</tspan><tspan x="784">ers</tspan><tspan x="822">3.58.0</tspan><tspan x="901">3</tspan><tspan x="920">3.6</tspan><tspan x="997">.42</tspan><tspan x="1062">67.01</tspan><tspan x="1121">.5</tspan><tspan x="1151">17</tspan><tspan x="1174">.64</tspan><tspan x="1201">4</tspan><tspan x="1222">.06125</tspan><tspan x="1304">04</tspan><tspan x="1338">.83</tspan><tspan x="1372">.15</tspan><tspan x="1412">08</tspan><tspan x="1456">.0ers</tspan><tspan x="1513">5.0</tspan><tspan x="1549">.0</tspan><tspan x="1582">9.5</tspan><tspan x="1639">.65</tspan><tspan x="1671">rss</tspan><tspan x="1700">5.9</tspan><tspan x="1755">7.89</tspan></text>
<text x="3" y="1036" style="font-size:11.500px">©IT-Finance.com  <tspan style="font-style:italic">Data is indicative</tspan></text>

<rect x="313" y="701.500" width="1493" height="5" fill="#ff0000"/>
<rect x="207" y="97" width="1" height="944" fill="#ff8a90"/>

<!-- tooltip -->
<rect x="137.500" y="715.500" width="142" height="30" rx="3" fill="#fdf8ec" stroke="#f6b060"/>
<rect x="167.500" y="683" width="112" height="32.500" fill="#fdf5e2" stroke="#f6b060"/>
<text x="140" y="739">2@21,377.5</text>
<text x="168" y="707">Day High 25,827.5 Low 23,661.5</text>
<text x="172" y="707">021,377.5  25,827.5</text>
<rect x="313" y="701.500" width="226" height="5" fill="#ff0000" opacity=".9"/>
<text x="313" y="707" opacity=".8">5,827.5 Low 23,661.5</text>

<!-- pane headers -->
<rect x="0.500" y="97.500" width="522" height="33" fill="url(#gH)" stroke="#7f9aa8"/>
<text x="4" y="122" textLength="411" lengthAdjust="spacingAndGlyphs">Equity curve: Leo Neural DJI 5M v2.0</text>
<use href="#wr" x="422" y="98"/><use href="#win" x="456" y="98"/><use href="#cl" x="489" y="98"/>
<rect x="0.500" y="455" width="614" height="33" fill="url(#gH)" stroke="#7f9aa8"/>
<text x="4" y="480" textLength="539" lengthAdjust="spacingAndGlyphs">ProBacktest - Positions: Leo Neural DJI 5M v2.0</text>
<use href="#win" x="547" y="456"/><use href="#cl" x="581" y="456"/>
<rect x="0.500" y="683" width="167" height="33.500" fill="url(#gH)" stroke="#7f9aa8"/>
<text x="4" y="708">Price</text>
<use href="#wr" x="67" y="684"/><use href="#win" x="100" y="684"/><use href="#cl" x="134" y="684"/>
<rect x="0.500" y="717" width="40.500" height="35" fill="url(#gH)" stroke="#7f9aa8"/>
<path d="M18 723C12 724 11 730 12 738H15L9 746 3 738H7C6 729 10 722 18 721Z" fill="#ee4040"/>
<path d="M23 746C29 745 30 739 29 731H26L32 723 38 731H34C35 740 31 747 23 748Z" fill="#20b030"/>

<!-- right axis -->
<rect x="1805.500" y="97" width="1.500" height="940" fill="#7f9aa8"/>
<path d="M1806 113h4M1806 151h4M1806 179h4M1806 207h4M1806 236h4M1806 261h4M1806 293h4M1806 321h4M1806 349h4M1806 377h4M1806 406h4M1806 468h4M1806 516h4M1806 618h4M1806 691h4M1806 892h4M1806 943h4" stroke="#7f9aa8" stroke-width="1.200"/>
<rect x="1810.500" y="99" width="80" height="29" fill="#dde8f5" stroke="#8ba5b2"/>
<text x="1813" y="123" style="fill:#6098ff">21,319</text>
<text x="1812" y="159" class="b">20,000</text>
<text x="1813" y="216">18,000</text>
<rect x="1810.500" y="245.500" width="80" height="29.500" fill="#fbf71a" stroke="#8ba06a"/>
<text x="1813" y="270">16,140</text>
<text x="1813" y="329">14,000</text>
<text x="1813" y="385">12,000</text>
<text x="1812" y="477">2</text>
<text x="1812" y="524">1</text>
<rect x="1810.500" y="553" width="17" height="29" fill="#d3e0f3" stroke="#8ba5b2"/>
<text x="1812" y="577" style="fill:#6098ff">0</text>
<text x="1812" y="627">-1</text>

<text x="1813" y="698">27,000</text>
<rect x="1810" y="689" width="87" height="30" fill="url(#gRd)" stroke="#a08a90"/>
<text x="1813" y="713">Monthly</text>
<rect x="1810" y="720" width="73" height="12" fill="#ff9c9c"/>
<rect x="1810" y="732" width="87" height="30" fill="url(#gO)" stroke="#b09a30"/>
<text x="1813" y="755">25,798.5</text>
<rect x="1810" y="762" width="82" height="25" fill="url(#gG)" stroke="#8fa8a0"/>
<text x="1888" y="782" text-anchor="end">Hourly</text>
<rect x="1810" y="765" width="73" height="40" fill="url(#gG)" stroke="#8fa8a0"/>
<text x="1880" y="798" text-anchor="end">Hour</text>
<rect x="1810" y="783" width="57" height="22" fill="url(#gG)" stroke="#8fa8a0"/>
<text x="1813" y="805">Daily</text>
<rect x="1810" y="798" width="57" height="20" fill="url(#gG)" stroke="#8fa8a0"/>
<text x="1813" y="821">Daily</text>
<rect x="1810" y="818" width="82" height="30" fill="url(#gG)" stroke="#8fa8a0"/>
<text x="1813" y="842">Weekly</text>
<rect x="1810" y="849" width="87" height="30" fill="url(#gG)" stroke="#8fa8a0"/>
<text x="1813" y="873">Monthly</text>
<text x="1813" y="899">23,000</text>
<text x="1813" y="952">22,000</text>
<rect x="1810" y="975" width="82" height="29.500" fill="url(#gG)" stroke="#8fa8a0"/>
<text x="1813" y="998">Weekly</text>

<!-- time axis -->
<path d="M125 1037v5M207 1037v5M226 1037v5M315 1037v5M420 1037v5M510 1037v5M600 1037v5M698 1037v5M786 1037v5M899 1037v5M1046 1037v5M1193 1037v5M1327 1037v5M1449 1037v5M1563 1037v5M1669 1037v5M1775 1037v5" stroke="#7f9aa8" stroke-width="1.200"/>
<rect x="76.500" y="1043" width="263" height="29" fill="#fbf71a" stroke="#8ba06a"/>
<text x="208" y="1066" text-anchor="middle">Tue 27-Jun-2017 08:50</text>
<text x="420" y="1066" text-anchor="middle">Sep</text><text x="510" y="1066" text-anchor="middle">Oct</text><text x="600" y="1066" text-anchor="middle">Nov</text><text x="698" y="1066" text-anchor="middle">Dec</text><text x="786" y="1066" text-anchor="middle" class="b">2018</text><text x="899" y="1066" text-anchor="middle">Feb</text><text x="1046" y="1066" text-anchor="middle">Mar</text><text x="1193" y="1066" text-anchor="middle">Apr</text><text x="1327" y="1066" text-anchor="middle">May</text><text x="1449" y="1066" text-anchor="middle">Jun</text><text x="1563" y="1066" text-anchor="middle">Jul</text><text x="1669" y="1066" text-anchor="middle">Aug</text><text x="1775" y="1066" text-anchor="middle">Sep</text>
<rect x="0" y="1073" width="1897" height="1.500" fill="#7f9aa8"/>
<rect x="0" y="1074.500" width="1897" height="1.500" fill="#e8eef2"/>
</svg>
</body></html>
